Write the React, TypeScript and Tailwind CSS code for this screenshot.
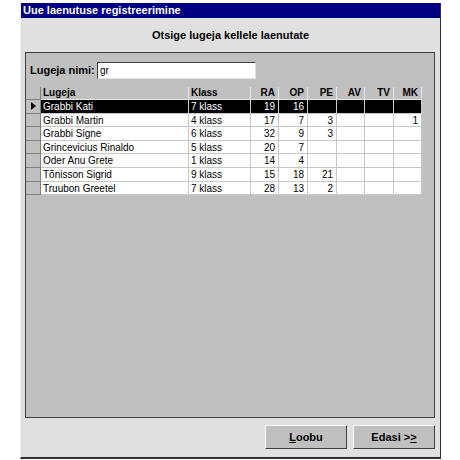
const cols = ['w-[15px]', 'w-[148px]', 'w-[62px]', 'w-[28px]', 'w-[29px]', 'w-[29px]', 'w-[28px]', 'w-[29px]', 'w-[28px]'];

type Row = { name: string; klass: string; nums: (number | null)[] };

const rows: Row[] = [
  { name: 'Grabbi Kati', klass: '7 klass', nums: [19, 16, null, null, null, null] },
  { name: 'Grabbi Martin', klass: '4 klass', nums: [17, 7, 3, null, null, 1] },
  { name: 'Grabbi Signe', klass: '6 klass', nums: [32, 9, 3, null, null, null] },
  { name: 'Grincevicius Rinaldo', klass: '5 klass', nums: [20, 7, null, null, null, null] },
  { name: 'Oder Anu Grete', klass: '1 klass', nums: [14, 4, null, null, null, null] },
  { name: 'Tõnisson Sigrid', klass: '9 klass', nums: [15, 18, 21, null, null, null] },
  { name: 'Truubon Greetel', klass: '7 klass', nums: [28, 13, 2, null, null, null] },
];

const headers = ['RA', 'OP', 'PE', 'AV', 'TV', 'MK'];

function Button({ children }: { children: React.ReactNode }) {
  return (
    <button className="w-[82px] h-[24px] bg-[#c0c0c0] border border-t-white border-l-white border-r-[#404040] border-b-[#404040] text-[11px] font-bold text-black">
      {children}
    </button>
  );
}

export default function App() {
  return (
    <div className="w-[460px] h-[460px] bg-white pt-[3px] pl-[20px] font-['Liberation_Sans',Arial,sans-serif]">
      <div className="w-[421px] h-[456px] flex flex-col bg-[#e0e0e0] border-l border-l-[#f4f4f4] border-r border-r-[#303030] border-b-2 border-b-[#303030]">
        {/* title bar */}
        <div className="h-[15px] bg-[#000080] text-white text-[11px] font-bold leading-[15px] pl-[2px]">
          Uue laenutuse registreerimine
        </div>

        <div className="h-[34px] flex items-center justify-center text-[11px] font-bold text-black">
          Otsige lugeja kellele laenutate
        </div>

        {/* group panel */}
        <div className="ml-[4px] w-[410px] h-[366px] bg-[#c0c0c0] border border-[#404040] flex flex-col">
          <div className="h-[34px] flex items-center">
            <span className="ml-[4px] w-[67px] text-[11px] font-bold">Lugeja nimi:</span>
            <div className="w-[159px] h-[17px] bg-white border border-t-[#404040] border-l-[#404040] border-r-[#e0e0e0] border-b-[#e0e0e0] text-[10px] leading-[15px] pl-[2px]">
              gr
            </div>
          </div>

          {/* table */}
          <div className="flex flex-col">
            <div className="flex h-[13px] text-[10px] font-bold">
              {cols.map((c, i) => (
                <div
                  key={i}
                  className={`${c} h-full border-r border-b ${i === 0 ? 'border-[#808080]' : 'border-[#e8e8e8]'} ${i > 2 ? 'text-right pr-[3px]' : 'pl-[2px]'} leading-[12px]`}
                >
                  {i === 1 ? 'Lugeja' : i === 2 ? 'Klass' : i > 2 ? headers[i - 3] : ''}
                </div>
              ))}
            </div>
            {rows.map((r, ri) => {
              const sel = ri === 0;
              return (
                <div key={ri} className="flex h-[13.6px] text-[10px]">
                  <div className="w-[15px] h-full bg-[#c0c0c0] border-r border-b border-[#808080] flex items-center justify-center">
                    {sel && (
                      <span className="w-0 h-0 border-y-[4px] border-y-transparent border-l-[5px] border-l-black" />
                    )}
                  </div>
                  <div className={`w-[148px] h-full border-r border-b border-[#c8c8c8] pl-[2px] leading-[13px] ${sel ? 'bg-black text-white' : 'bg-white'}`}>{r.name}</div>
                  <div className={`w-[62px] h-full border-r border-b border-[#c8c8c8] pl-[2px] leading-[13px] ${sel ? 'bg-black text-white' : 'bg-white'}`}>{r.klass}</div>
                  {r.nums.map((n, ni) => (
                    <div
                      key={ni}
                      className={`${cols[ni + 3]} h-full border-r border-b border-[#c8c8c8] text-right pr-[3px] leading-[13px] ${sel ? 'bg-black text-white' : 'bg-white'}`}
                    >
                      {n ?? ''}
                    </div>
                  ))}
                </div>
              );
            })}
          </div>
        </div>

        {/* buttons */}
        <div className="flex justify-end gap-[6px] pr-[5px] mt-[7px]">
          <Button>
            <span className="underline">L</span>oobu
          </Button>
          <Button>
            Edasi &gt;<span className="underline">&gt;</span>
          </Button>
        </div>
      </div>
    </div>
  );
}
